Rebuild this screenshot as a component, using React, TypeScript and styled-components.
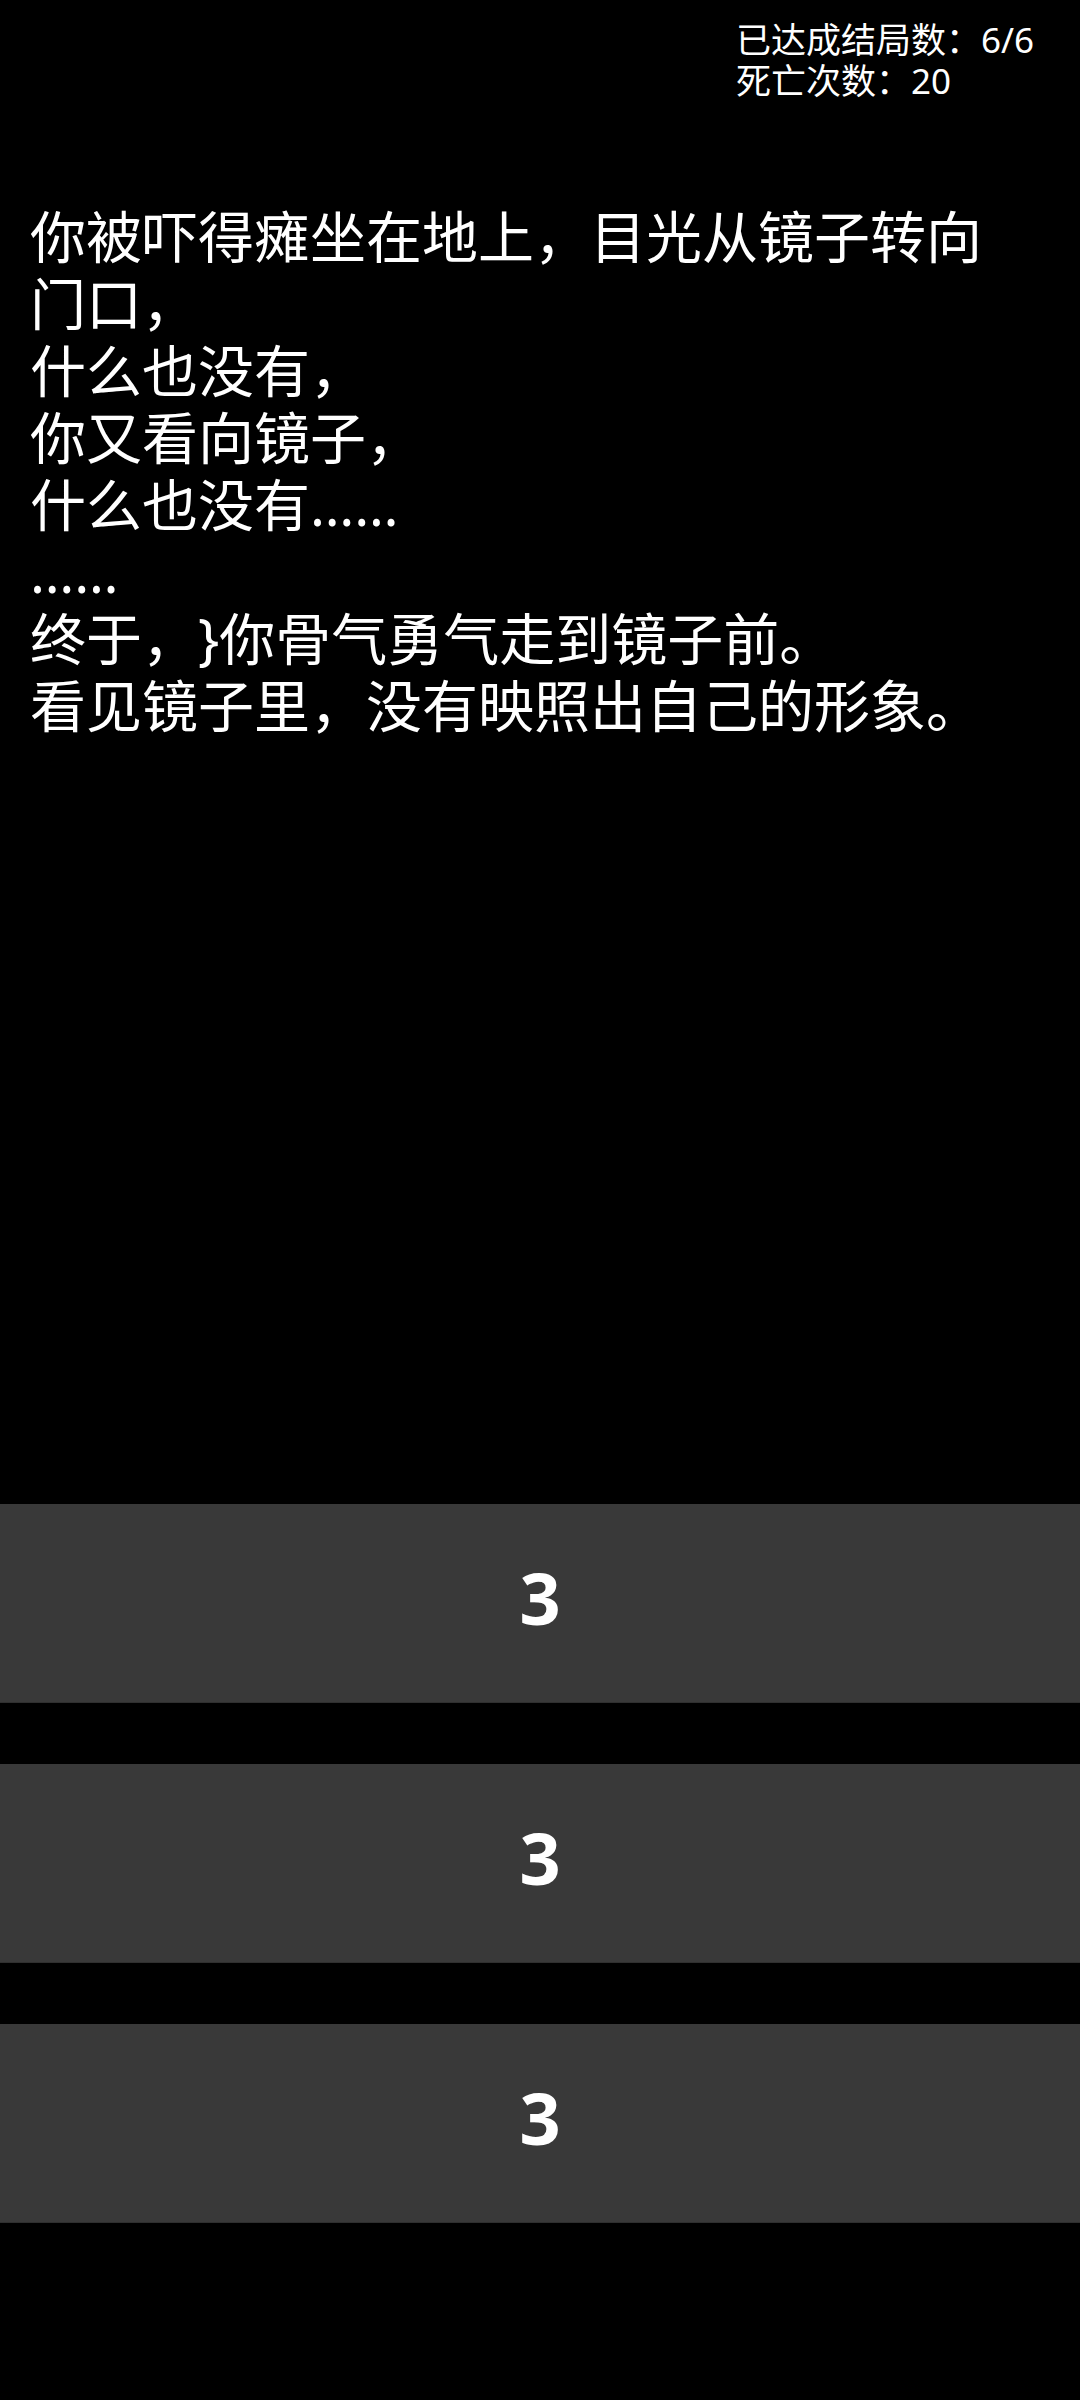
import React from 'react';
import styled, {createGlobalStyle} from "styled-components";

const GlobalStyle = createGlobalStyle`
  html, body {
    margin: 0;
    padding: 0;
    background: #000;
  }

  body {
    font-family: "Noto Sans", "Noto Sans CJK SC", sans-serif;
    color: #fff;
    text-spacing-trim: space-all;
  }
`

const Page = styled.div`
  min-height: 100vh;
  display: flex;
  flex-direction: column;
  background: #000;
`

const Stats = styled.div`
  display: flex;
  justify-content: flex-end;
  padding: 19px 46px 0 0;

  > div {
    font-size: 35px;
    line-height: 41px;
    color: #fff;
  }
`

const Story = styled.div`
  flex: 1;
  margin-top: 102px;
  padding: 0 60px 0 30px;
  font-size: 56px;
  line-height: 67px;
  white-space: pre-wrap;
  text-spacing-trim: space-all;
  color: #fff;
`

const Choices = styled.div`
  display: flex;
  flex-direction: column;
  gap: 61px;
  padding-bottom: 177px;
`

const ChoiceButton = styled.button`
  height: 199px;
  width: 100%;
  border: none;
  border-bottom: 1px solid #2f2f2f;
  background: #393939;
  color: #fff;
  font-family: "Noto Sans", "Noto Sans CJK SC", sans-serif;
  font-weight: 700;
  font-size: 72px;
  display: flex;
  justify-content: center;
  align-items: center;
  padding: 0 0 13px;
  cursor: pointer;
`

const story = `你被吓得瘫坐在地上，目光从镜子转向门口，
什么也没有，
你又看向镜子，
什么也没有……
……
终于，}你骨气勇气走到镜子前。
看见镜子里，没有映照出自己的形象。`

const choices = ['3', '3', '3']

const App: React.FC = () => {
    return (
        <>
            <GlobalStyle/>
            <Page>
                <Stats>
                    <div>
                        <div>已达成结局数：6/6</div>
                        <div>死亡次数：20</div>
                    </div>
                </Stats>
                <Story>{story}</Story>
                <Choices>
                    {choices.map((c, i) => (
                        <ChoiceButton key={i}>{c}</ChoiceButton>
                    ))}
                </Choices>
            </Page>
        </>
    )
}
export default App;
